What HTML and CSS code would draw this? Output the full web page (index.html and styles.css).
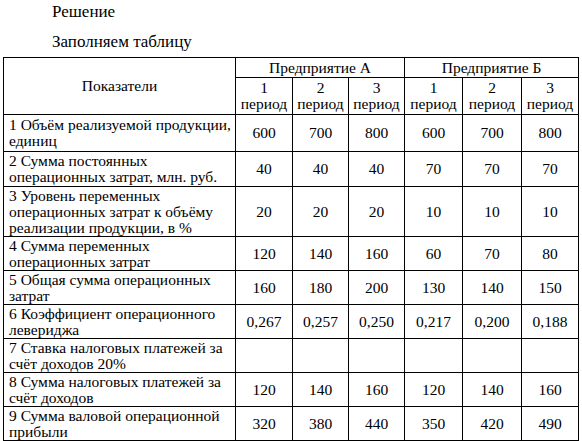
FILE: index.html
```html
<!DOCTYPE html>
<html lang="ru">
<head>
<meta charset="utf-8">
<link rel="stylesheet" href="styles.css">
</head>
<body>
<div class="page">
  <p class="title first">Решение</p>
  <p class="title second">Заполняем таблицу</p>
  <table class="grid">
    <colgroup>
      <col class="c-name">
      <col class="c-a1"><col class="c-a2"><col class="c-a3">
      <col class="c-b1"><col class="c-b2"><col class="c-b3">
    </colgroup>
    <thead>
      <tr class="h1">
        <th rowspan="2" class="name-head">Показатели</th>
        <th colspan="3">Предприятие А</th>
        <th colspan="3">Предприятие Б</th>
      </tr>
      <tr class="h2">
        <th>1<br>период</th><th>2<br>период</th><th>3<br>период</th>
        <th>1<br>период</th><th>2<br>период</th><th>3<br>период</th>
      </tr>
    </thead>
    <tbody>
      <tr class="r-tall"><td class="name">1 Объём реализуемой продукции, единиц</td><td>600</td><td>700</td><td>800</td><td>600</td><td>700</td><td>800</td></tr>
      <tr class="r-mid"><td class="name">2 Сумма постоянных операционных затрат, млн. руб.</td><td>40</td><td>40</td><td>40</td><td>70</td><td>70</td><td>70</td></tr>
      <tr><td class="name">3 Уровень переменных операционных затрат к объёму реализации продукции, в %</td><td>20</td><td>20</td><td>20</td><td>10</td><td>10</td><td>10</td></tr>
      <tr><td class="name">4 Сумма переменных операционных затрат</td><td>120</td><td>140</td><td>160</td><td>60</td><td>70</td><td>80</td></tr>
      <tr><td class="name">5 Общая сумма операционных затрат</td><td>160</td><td>180</td><td>200</td><td>130</td><td>140</td><td>150</td></tr>
      <tr><td class="name">6 Коэффициент операционного левериджа</td><td>0,267</td><td>0,257</td><td>0,250</td><td>0,217</td><td>0,200</td><td>0,188</td></tr>
      <tr><td class="name">7 Ставка налоговых платежей за счёт доходов 20%</td><td></td><td></td><td></td><td></td><td></td><td></td></tr>
      <tr><td class="name">8 Сумма налоговых платежей за счёт доходов</td><td>120</td><td>140</td><td>160</td><td>120</td><td>140</td><td>160</td></tr>
      <tr><td class="name">9 Сумма валовой операционной прибыли</td><td>320</td><td>380</td><td>440</td><td>350</td><td>420</td><td>490</td></tr>
    </tbody>
  </table>
</div>
</body>
</html>
```

FILE: styles.css
```css
html, body {
  margin: 0;
  padding: 0;
  background: #ffffff;
}
body {
  font-family: "Liberation Serif", "Times New Roman", serif;
  font-size: 16px;
  color: #000000;
}
.page {
  padding: 3px 0 0 3px;
}
.title {
  margin: 0;
  padding-left: 49px;
  font-size: 17px;
  line-height: 18px;
}
.title.first {
  margin-bottom: 12px;
}
.title.second {
  margin-bottom: 6px;
}
.grid {
  border-collapse: collapse;
  table-layout: fixed;
  width: 575px;
  font-family: "Liberation Serif", "Times New Roman", serif;
  font-size: 15.5px;
}
.c-name { width: 232px; }
.c-a1 { width: 57px; }
.c-a2 { width: 56px; }
.c-a3 { width: 56px; }
.c-b1 { width: 58px; }
.c-b2 { width: 59px; }
.c-b3 { width: 57px; }
.grid th,
.grid td {
  border: 1px solid #000000;
  padding: 1px 2px 0 2px;
  line-height: 16px;
  text-align: center;
  vertical-align: middle;
  font-weight: normal;
}
.grid th {
  padding: 0 2px;
}
.grid .h1 th {
  height: 19px;
}
.grid .h2 th {
  height: 36px;
}
.grid td.name {
  text-align: left;
  padding: 1px 2px 0 5px;
}
.grid .r-tall td,
.grid .r-tall td.name {
  padding-top: 2px;
  padding-bottom: 2px;
}
.grid .r-mid td,
.grid .r-mid td.name {
  padding-top: 1px;
  padding-bottom: 1px;
}
```
